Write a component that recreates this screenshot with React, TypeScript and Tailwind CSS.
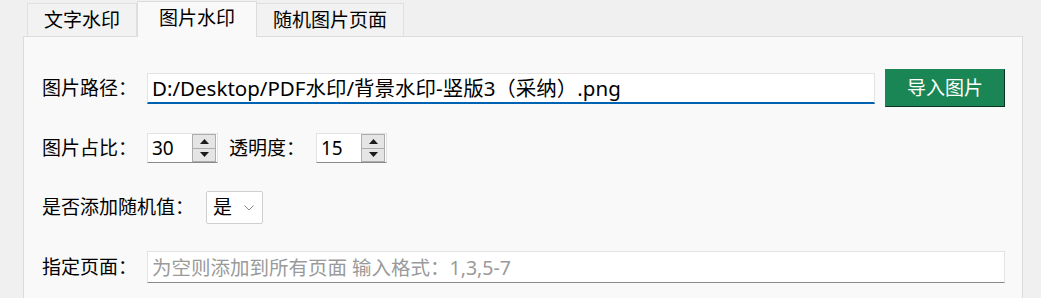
const font = "font-['Noto_Sans','Noto_Sans_CJK_SC',sans-serif]";

function SpinBox({ value }: { value: string }) {
    return (
        <div className="flex h-[30px] w-[71px] items-center justify-between border border-[#e3e3e3] border-b-[#8a8a8a] bg-white pl-[4px] pr-[1px]">
            <span className="text-[19px] leading-none text-black">{value}</span>
            <div className="flex h-[28px] w-[24px] flex-col border border-[#adadad] bg-[#e5e5e5]">
                <div className="flex flex-1 items-center justify-center border-b border-[#adadad]">
                    <svg width="9" height="5" viewBox="0 0 9 5">
                        <path d="M0 5 L4.5 0 L9 5 Z" fill="#1a1a1a" />
                    </svg>
                </div>
                <div className="flex flex-1 items-center justify-center">
                    <svg width="9" height="5" viewBox="0 0 9 5">
                        <path d="M0 0 L4.5 5 L9 0 Z" fill="#1a1a1a" />
                    </svg>
                </div>
            </div>
        </div>
    );
}

export default function App() {
    return (
        <div className={`flex h-[298px] w-full flex-col overflow-hidden bg-[#f0f0f0] pl-[23px] pr-[18px] ${font}`}>
            {/* tab bar */}
            <div className="relative z-10 flex h-[36px] items-end pl-[4px]">
                <div className="flex h-[33px] w-[110px] items-center justify-center border border-b-0 border-[#e0e0e0] bg-[#f2f2f2] text-[19px] text-black">
                    文字水印
                </div>
                <div className="-mb-px flex h-[36px] w-[120px] items-center justify-center border border-b-0 border-[#dcdcdc] bg-[#f9f9f9] pb-[2px] text-[19px] text-black">
                    图片水印
                </div>
                <div className="flex h-[33px] w-[147px] items-center justify-center border border-b-0 border-l-0 border-[#e0e0e0] bg-[#f2f2f2] text-[19px] text-black">
                    随机图片页面
                </div>
            </div>

            {/* panel */}
            <div className="flex flex-1 flex-col border border-b-0 border-[#dcdcdc] bg-[#f9f9f9] pl-[18px] pr-[17px] pt-[32px] text-[19px] text-black">
                <div className="flex h-[38px] items-center">
                    <span className="w-[105px] shrink-0">图片路径：</span>
                    <div className="flex h-[31px] flex-1 items-center border border-[#e3e3e3] border-b-2 border-b-[#0063b1] bg-white pl-[4px]">
                        <span className="pt-[2px] text-[20.5px] leading-none">D:/Desktop/PDF水印/背景水印-竖版3（采纳）.png</span>
                    </div>
                    <button className="ml-[10px] flex h-[38px] w-[120px] items-center justify-center border border-[#1b8655] border-b-[#0c3222] border-r-[#0c3222] bg-[#1b8655] text-white">
                        导入图片
                    </button>
                </div>

                <div className="mt-[26px] flex h-[30px] items-center">
                    <span className="w-[105px] shrink-0">图片占比：</span>
                    <SpinBox value="30" />
                    <span className="ml-[11px] w-[87px] shrink-0">透明度：</span>
                    <SpinBox value="15" />
                </div>

                <div className="mt-[28px] flex h-[33px] items-center">
                    <span className="w-[164px] shrink-0">是否添加随机值：</span>
                    <div className="flex h-[33px] w-[57px] items-center justify-between rounded-[2px] border border-[#cfcfcf] bg-white pl-[6px] pr-[8px]">
                        <span className="leading-none">是</span>
                        <svg width="10" height="6" viewBox="0 0 10 6">
                            <path d="M0.5 0.5 L5 5 L9.5 0.5" fill="none" stroke="#8a8a8a" strokeWidth="1" />
                        </svg>
                    </div>
                </div>

                <div className="mt-[27px] flex h-[32px] items-center">
                    <span className="w-[105px] shrink-0">指定页面：</span>
                    <div className="flex h-[32px] flex-1 items-center border border-[#e3e3e3] border-b-[#8a8a8a] bg-white pl-[4px]">
                        <span className="pt-[1px] text-[19.5px] leading-none text-[#9a9a9a]">为空则添加到所有页面 输入格式：1,3,5-7</span>
                    </div>
                </div>
            </div>
        </div>
    );
}
